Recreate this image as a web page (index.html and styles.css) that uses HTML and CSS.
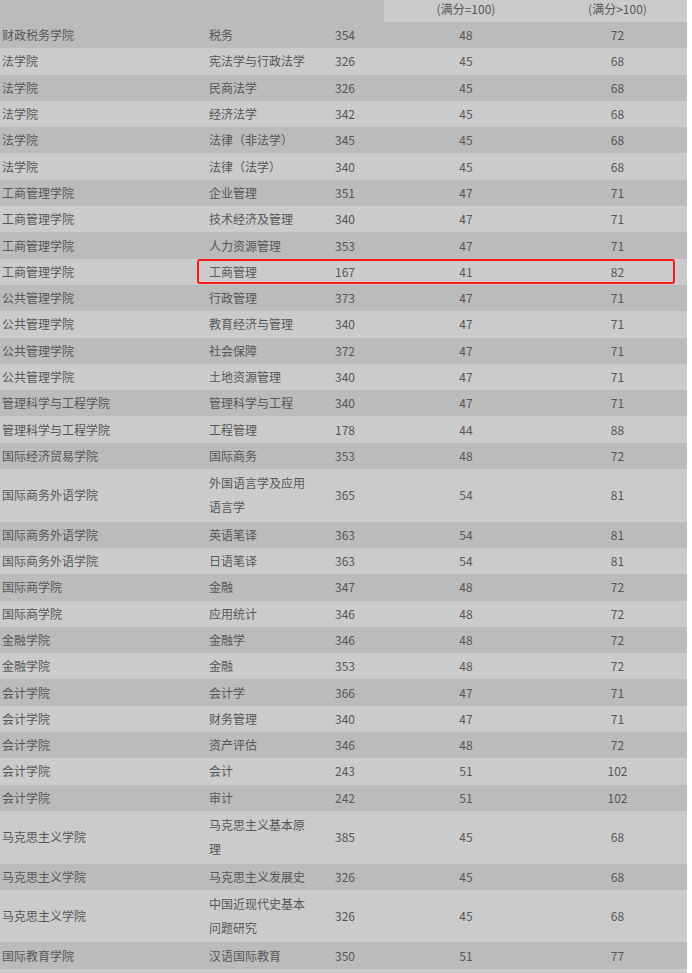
FILE: index.html
```html
<!DOCTYPE html>
<html lang="zh-CN">
<head>
<meta charset="utf-8">
<title>复试分数线</title>
<link rel="stylesheet" href="styles.css">
</head>
<body>
<div class="sheet">
  <table class="scores">
    <colgroup>
      <col class="c-school">
      <col class="c-major">
      <col class="c-total">
      <col class="c-single">
      <col class="c-multi">
    </colgroup>
    <tbody>
      <tr class="head">
        <td class="dark"></td><td class="dark"></td><td class="dark"></td>
        <td class="mid">(满分=100)</td><td class="mid">(满分&gt;100)</td>
      </tr>
      <tr><td>财政税务学院</td><td>税务</td><td>354</td><td class="mid">48</td><td class="mid">72</td></tr>
      <tr><td>法学院</td><td>宪法学与行政法学</td><td>326</td><td class="mid">45</td><td class="mid">68</td></tr>
      <tr><td>法学院</td><td>民商法学</td><td>326</td><td class="mid">45</td><td class="mid">68</td></tr>
      <tr><td>法学院</td><td>经济法学</td><td>342</td><td class="mid">45</td><td class="mid">68</td></tr>
      <tr><td>法学院</td><td>法律（非法学）</td><td>345</td><td class="mid">45</td><td class="mid">68</td></tr>
      <tr><td>法学院</td><td>法律（法学）</td><td>340</td><td class="mid">45</td><td class="mid">68</td></tr>
      <tr><td>工商管理学院</td><td>企业管理</td><td>351</td><td class="mid">47</td><td class="mid">71</td></tr>
      <tr><td>工商管理学院</td><td>技术经济及管理</td><td>340</td><td class="mid">47</td><td class="mid">71</td></tr>
      <tr><td>工商管理学院</td><td>人力资源管理</td><td>353</td><td class="mid">47</td><td class="mid">71</td></tr>
      <tr><td>工商管理学院</td><td>工商管理</td><td>167</td><td class="mid">41</td><td class="mid">82</td></tr>
      <tr><td>公共管理学院</td><td>行政管理</td><td>373</td><td class="mid">47</td><td class="mid">71</td></tr>
      <tr><td>公共管理学院</td><td>教育经济与管理</td><td>340</td><td class="mid">47</td><td class="mid">71</td></tr>
      <tr><td>公共管理学院</td><td>社会保障</td><td>372</td><td class="mid">47</td><td class="mid">71</td></tr>
      <tr><td>公共管理学院</td><td>土地资源管理</td><td>340</td><td class="mid">47</td><td class="mid">71</td></tr>
      <tr><td>管理科学与工程学院</td><td>管理科学与工程</td><td>340</td><td class="mid">47</td><td class="mid">71</td></tr>
      <tr><td>管理科学与工程学院</td><td>工程管理</td><td>178</td><td class="mid">44</td><td class="mid">88</td></tr>
      <tr><td>国际经济贸易学院</td><td>国际商务</td><td>353</td><td class="mid">48</td><td class="mid">72</td></tr>
      <tr class="tall"><td>国际商务外语学院</td><td>外国语言学及应用语言学</td><td>365</td><td class="mid">54</td><td class="mid">81</td></tr>
      <tr><td>国际商务外语学院</td><td>英语笔译</td><td>363</td><td class="mid">54</td><td class="mid">81</td></tr>
      <tr><td>国际商务外语学院</td><td>日语笔译</td><td>363</td><td class="mid">54</td><td class="mid">81</td></tr>
      <tr><td>国际商学院</td><td>金融</td><td>347</td><td class="mid">48</td><td class="mid">72</td></tr>
      <tr><td>国际商学院</td><td>应用统计</td><td>346</td><td class="mid">48</td><td class="mid">72</td></tr>
      <tr><td>金融学院</td><td>金融学</td><td>346</td><td class="mid">48</td><td class="mid">72</td></tr>
      <tr><td>金融学院</td><td>金融</td><td>353</td><td class="mid">48</td><td class="mid">72</td></tr>
      <tr><td>会计学院</td><td>会计学</td><td>366</td><td class="mid">47</td><td class="mid">71</td></tr>
      <tr><td>会计学院</td><td>财务管理</td><td>340</td><td class="mid">47</td><td class="mid">71</td></tr>
      <tr><td>会计学院</td><td>资产评估</td><td>346</td><td class="mid">48</td><td class="mid">72</td></tr>
      <tr><td>会计学院</td><td>会计</td><td>243</td><td class="mid">51</td><td class="mid">102</td></tr>
      <tr><td>会计学院</td><td>审计</td><td>242</td><td class="mid">51</td><td class="mid">102</td></tr>
      <tr class="tall"><td>马克思主义学院</td><td>马克思主义基本原理</td><td>385</td><td class="mid">45</td><td class="mid">68</td></tr>
      <tr><td>马克思主义学院</td><td>马克思主义发展史</td><td>326</td><td class="mid">45</td><td class="mid">68</td></tr>
      <tr class="tall"><td>马克思主义学院</td><td>中国近现代史基本问题研究</td><td>326</td><td class="mid">45</td><td class="mid">68</td></tr>
      <tr><td>国际教育学院</td><td>汉语国际教育</td><td>350</td><td class="mid">51</td><td class="mid">77</td></tr>
      <tr><td>&nbsp;</td><td></td><td></td><td class="mid"></td><td class="mid"></td></tr>
    </tbody>
  </table>
  <div class="highlight"></div>
</div>
</body>
</html>
```

FILE: styles.css
```css
html, body {
  margin: 0;
  padding: 0;
  background: #ffffff;
}

body {
  font-family: "Noto Sans CJK SC", "Microsoft YaHei", sans-serif;
  font-size: 12px;
  color: #575757;
  overflow: hidden;
}

.sheet {
  position: relative;
  width: 687px;
}

.scores {
  width: 687px;
  table-layout: fixed;
  border-collapse: collapse;
  border-spacing: 0;
}

.c-school { width: 207px; }
.c-major  { width: 126px; }
.c-total  { width: 51px; }
.c-single { width: 164px; }
.c-multi  { width: 139px; }

.scores td {
  padding: 1px 2px;
  line-height: 24px;
  height: 26.3px;
  box-sizing: border-box;
  vertical-align: middle;
  text-align: left;
  white-space: normal;
  word-break: break-all;
}

.scores td:nth-child(2) {
  padding-right: 22px;
}

.scores td.mid {
  text-align: center;
  padding-left: 0;
  padding-right: 0;
}

.scores tr:nth-child(even) td {
  background: #bbbbbb;
}

.scores tr:nth-child(odd) td {
  background: #cbcbcb;
}

.scores tr.head td {
  height: 22px;
  line-height: 18px;
  padding-top: 0;
  padding-bottom: 4px;
  background: #cbcbcb;
}

.scores tr.head td.dark {
  background: #bbbbbb;
}

.scores tr.tall td {
  padding-top: 2.3px;
  padding-bottom: 2.3px;
}

.highlight {
  position: absolute;
  left: 197px;
  top: 259px;
  width: 478px;
  height: 25px;
  box-sizing: border-box;
  border: 2px solid #ff1a1a;
  border-radius: 3px;
}
```
